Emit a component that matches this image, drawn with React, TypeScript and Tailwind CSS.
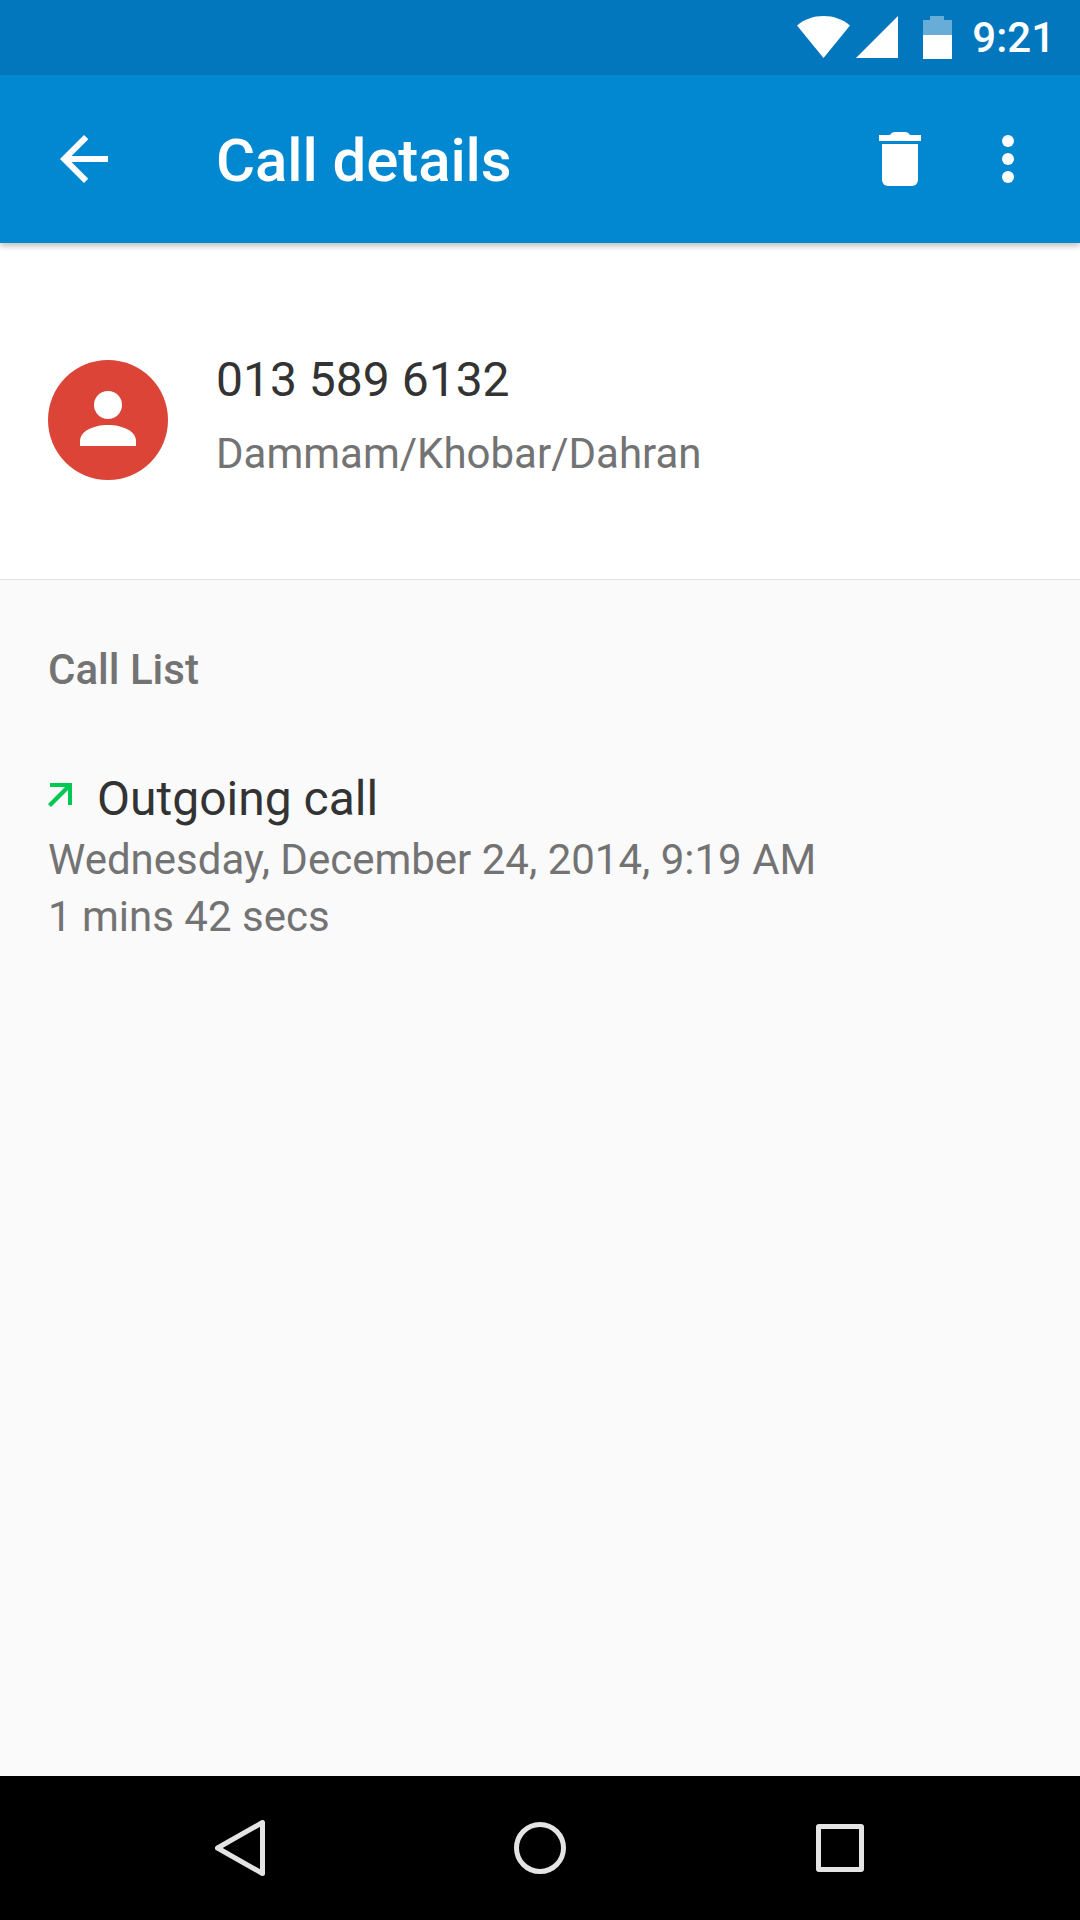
const roboto = "font-['Roboto',sans-serif]";

function StatusBar() {
  return (
    <div className="flex h-[75px] items-center justify-end bg-[#0277bd] pr-[25px]">
      <svg width="53" height="42" viewBox="0 0 53 42" className="mb-[1px]">
        <path d="M26.5 0C16.5 0 7.5 3.2 0 9.5L26.5 42 53 9.5C45.5 3.2 36.5 0 26.5 0z" fill="#fff" />
      </svg>
      <svg width="42" height="42" viewBox="0 0 42 42" className="ml-[6px] mb-[1px]">
        <path d="M42 0v42H0z" fill="#fff" />
      </svg>
      <svg width="29" height="43" viewBox="0 0 29 43" className="ml-[25px] mb-[1px]">
        <path d="M7 0h14v4h8v15H0V4h7z" fill="#fff" fillOpacity="0.4" />
        <path d="M0 19h29v24H0z" fill="#fff" />
      </svg>
      <span className={`${roboto} ml-[20px] text-[42px] leading-none font-medium text-white`}>9:21</span>
    </div>
  );
}

function Toolbar() {
  return (
    <div className="relative z-10 flex h-[168px] items-center bg-[#0288d1] shadow-[0_3px_6px_rgba(0,0,0,0.25)]">
      <div className="flex w-[216px] pl-[60px]">
        <svg width="48" height="48" viewBox="0 0 48 48">
          <path d="M48 21H11.5L28.3 4.2 24 0 0 24l24 24 4.2-4.2L11.5 27H48z" fill="#fff" />
        </svg>
      </div>
      <span className={`${roboto} flex-1 pt-[4px] text-[60px] leading-none font-medium tracking-[-0.1px] text-white`}>Call details</span>
      <svg width="42" height="54" viewBox="0 0 42 54">
        {/* lid with handle, then the can */}
        <path d="M0 3h11c1-2 3-3 5-3h10c2 0 4 1 5 3h11v6H0z" fill="#fff" />
        <path d="M3 12h36v36a6 6 0 0 1-6 6H9a6 6 0 0 1-6-6z" fill="#fff" />
      </svg>
      <div className="ml-[81px] mr-[66px] flex flex-col gap-[6px]">
        <span className="size-[12px] rounded-full bg-white" />
        <span className="size-[12px] rounded-full bg-white" />
        <span className="size-[12px] rounded-full bg-white" />
      </div>
    </div>
  );
}

function ContactHeader() {
  return (
    <div className="flex h-[337px] items-start border-b-[1px] border-[#dedede] bg-white pl-[48px] pt-[105px]">
      <div className="mt-[12px] flex size-[120px] items-center justify-center rounded-full bg-[#db4437]">
        <svg width="56" height="55" viewBox="0 0 56 55" className="mb-[3px]">
          <circle cx="28" cy="14" r="14" fill="#fff" />
          <path d="M0 55V50C0 40 14 34 28 34s28 6 28 16v5z" fill="#fff" />
        </svg>
      </div>
      <div className="ml-[48px] flex flex-col">
        <span className={`${roboto} text-[48px] leading-[64px] text-[#333333]`}>013 589 6132</span>
        <span className={`${roboto} mt-[14px] text-[42px] leading-[56px] text-[#737373]`}>Dammam/Khobar/Dahran</span>
      </div>
    </div>
  );
}

function CallList() {
  return (
    <div className="flex flex-1 flex-col bg-[#fafafa] pl-[48px] pt-[65px]">
      <span className={`${roboto} text-[42px] leading-[50px] font-medium text-[#737373]`}>Call List</span>
      <div className="mt-[72px] flex items-center">
        <svg width="24" height="24" viewBox="0 0 24 24" className="mb-[8px]">
          <path d="M2 0h22v22h-4V7L3 24l-3-3L17 4H2z" fill="#00c853" />
        </svg>
        <span className={`${roboto} ml-[25px] text-[48px] leading-[64px] text-[#333333]`}>Outgoing call</span>
      </div>
      <span className={`${roboto} text-[42px] leading-[57px] text-[#737373]`}>Wednesday, December 24, 2014, 9:19 AM</span>
      <span className={`${roboto} text-[42px] leading-[57px] text-[#737373]`}>1 mins 42 secs</span>
    </div>
  );
}

function NavBar() {
  return (
    <div className="flex h-[144px] items-center justify-center bg-black">
      <div className="flex w-[300px] justify-center">
        <svg width="50" height="56" viewBox="0 0 50 56">
          <path d="M47.5 2.5v51L2.5 28z" fill="none" stroke="#e4e4e4" strokeWidth="5" strokeLinejoin="round" />
        </svg>
      </div>
      <div className="flex w-[300px] justify-center">
        <div className="size-[52px] rounded-full border-[5px] border-[#e4e4e4]" />
      </div>
      <div className="flex w-[300px] justify-center">
        <div className="size-[48px] rounded-[3px] border-[5px] border-[#e4e4e4]" />
      </div>
    </div>
  );
}

export default function App() {
  return (
    <div className="flex h-[1920px] w-[1080px] flex-col overflow-hidden">
      <StatusBar />
      <Toolbar />
      <ContactHeader />
      <CallList />
      <NavBar />
    </div>
  );
}
